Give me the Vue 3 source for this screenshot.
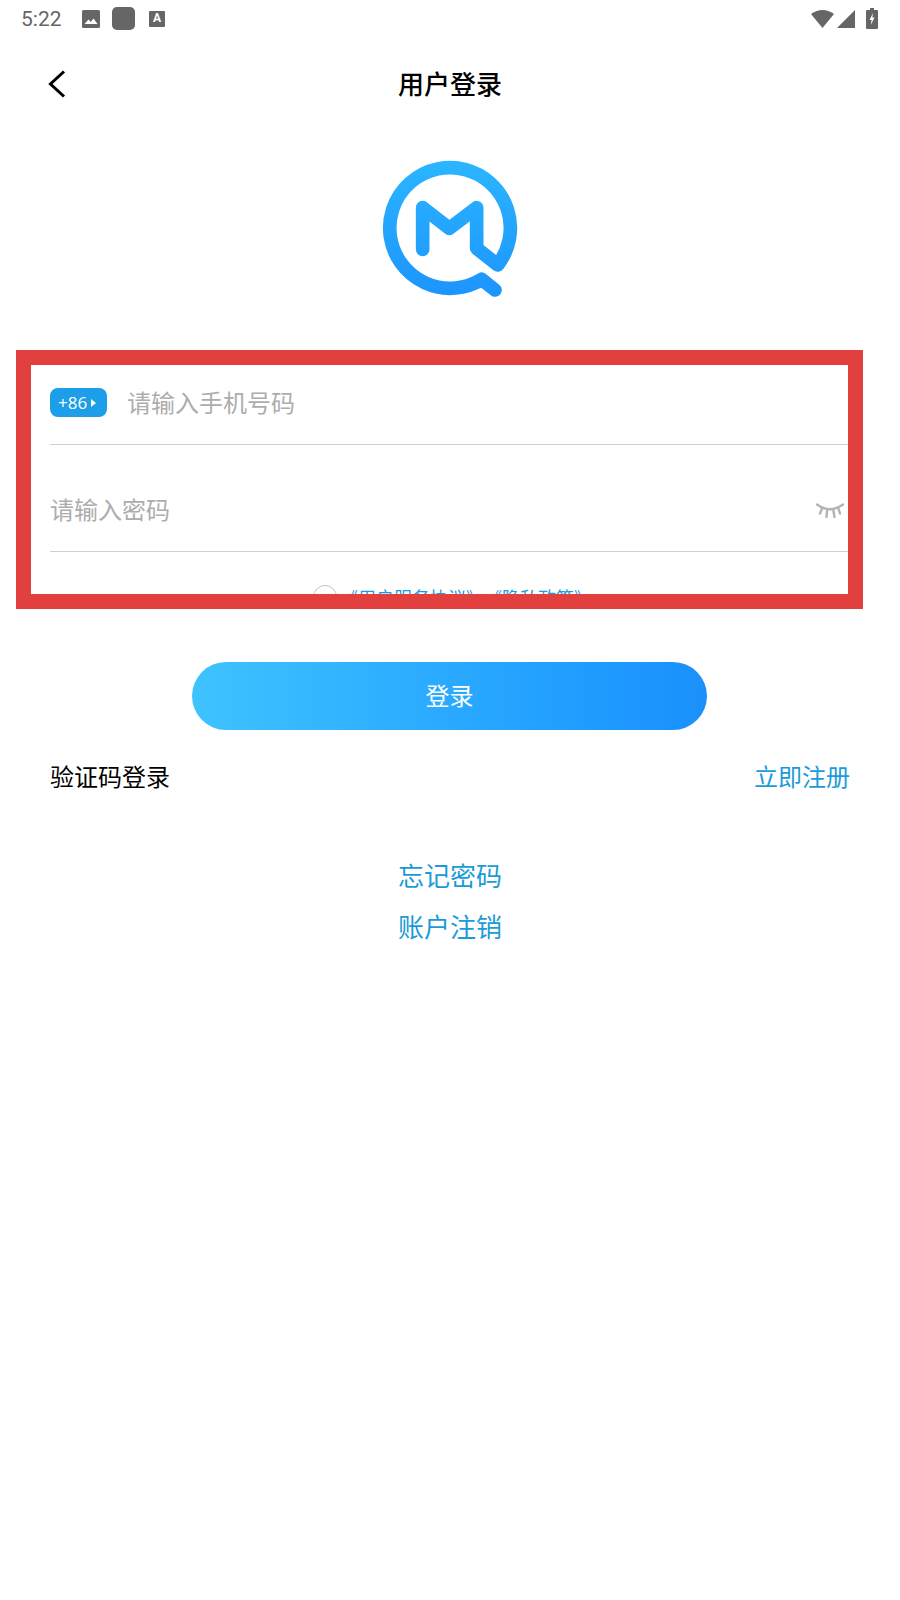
<template>
  <div class="page">
    <div class="status-bar">
      <div class="status-left">
        <span class="time">5:22</span>
        <svg class="ic-image" width="18" height="18" viewBox="0 0 18 18">
          <rect width="18" height="18" rx="1.5" fill="#666" />
          <path d="M2.5 14 L6.5 9.5 L8.8 12 L11.5 8.5 L15.5 14 Z" fill="#fff" />
        </svg>
        <span class="ic-square"></span>
        <span class="ic-font">A</span>
      </div>
      <div class="status-right">
        <svg width="23" height="19" viewBox="0 0 23 19"><path d="M0 5 Q11.5 -3 23 5 L11.5 19 Z" fill="#666" /></svg>
        <svg width="18" height="18" viewBox="0 0 18 18"><path d="M18 0 V18 H0 Z" fill="#666" /></svg>
        <svg class="ic-battery" width="12" height="21" viewBox="0 0 12 21">
          <path d="M4 0 H8 V2 H11 Q12 2 12 3 V20 Q12 21 11 21 H1 Q0 21 0 20 V3 Q0 2 1 2 H4 Z" fill="#666" />
          <path d="M7 5 L3.5 12 H5.6 L4.8 17 L8.5 9.6 H6.3 Z" fill="#fff" />
        </svg>
      </div>
    </div>

    <div class="nav">
      <svg class="back" width="18" height="28" viewBox="0 0 18 28">
        <path d="M16 1.5 L2.5 14 L16 26.5" fill="none" stroke="#000" stroke-width="3" />
      </svg>
      <span class="title">用户登录</span>
    </div>

    <svg class="logo" width="180" height="170" viewBox="0 0 540 510">
      <defs>
        <linearGradient id="logoGrad" gradientUnits="userSpaceOnUse" x1="0" y1="60" x2="0" y2="470">
          <stop offset="0" stop-color="#2bb6ff" />
          <stop offset="1" stop-color="#1c94fd" />
        </linearGradient>
      </defs>
      <path
        d="M188 328 V203 L268 265 L350 203 V325 L413 375 A181 181 0 1 0 365 418 L405 450"
        fill="none"
        stroke="url(#logoGrad)"
        stroke-width="41"
        stroke-linecap="round"
        stroke-linejoin="round"
      />
    </svg>

    <div class="form-box">
      <div class="row row-phone">
        <span class="code">+86<i class="caret"></i></span>
        <span class="placeholder">请输入手机号码</span>
      </div>
      <div class="row row-pwd">
        <span class="placeholder pwd">请输入密码</span>
        <svg class="eye" width="28" height="15" viewBox="0 0 28 15">
          <path
            d="M1 1.5 Q14 11 27 1.5 M6 5.5 L4 10.5 M11 8 L10.5 14 M17.5 8 L18.5 14 M22.5 5.5 L24 10.5"
            fill="none"
            stroke="#b3b3b3"
            stroke-width="2.4"
            stroke-linecap="round"
          />
        </svg>
      </div>
      <div class="agree">
        <span class="radio"></span>
        <span class="agree-text">《用户服务协议》、《隐私政策》</span>
      </div>
    </div>

    <button class="login-btn"><span class="login-label">登录</span></button>

    <div class="links">
      <span class="code-login">验证码登录</span>
      <span class="link">立即注册</span>
    </div>

    <div class="center-links">
      <span class="link big">忘记密码</span>
      <span class="link big">账户注销</span>
    </div>
  </div>
</template>

<script setup>
</script>

<style>
html,
body {
  background: #fff;
}
</style>

<style scoped>
.page {
  width: 900px;
  height: 1600px;
  background: #fff;
  overflow: hidden;
  display: flex;
  flex-direction: column;
  font-family: "Noto Sans CJK SC", "Noto Sans", sans-serif;
}

.status-bar {
  height: 37px;
  display: flex;
  justify-content: space-between;
  padding: 0 21px 0 21px;
  box-sizing: border-box;
}

.status-left,
.status-right {
  display: flex;
  align-items: center;
  height: 37px;
}

.time {
  font-family: Roboto, sans-serif;
  font-size: 21px;
  color: #666;
  width: 61px;
}

.ic-square {
  width: 23px;
  height: 23px;
  margin-left: 12px;
  background: #666;
  border-radius: 5px;
}

.ic-font {
  width: 16px;
  height: 16px;
  margin-left: 14px;
  background: #666;
  border-radius: 1px;
  color: #fff;
  font-family: Roboto, sans-serif;
  font-weight: 700;
  font-size: 12px;
  line-height: 15px;
  text-align: center;
}

.status-right {
  gap: 3px;
}

.ic-battery {
  margin-left: 8px;
  margin-right: 1px;
}

.nav {
  height: 94px;
  position: relative;
  display: flex;
  align-items: center;
  justify-content: center;
  padding-bottom: 4px;
  box-sizing: border-box;
}

.back {
  position: absolute;
  left: 48px;
  top: 33px;
}

.title {
  font-size: 26px;
  font-weight: 500;
  color: #000;
}

.logo {
  display: block;
  margin: 9px auto 0;
  flex: none;
}

.form-box {
  width: 847px;
  height: 259px;
  flex: none;
  margin: 40px 0 0 16px;
  border: 15px solid #e23f3f;
  box-sizing: border-box;
  overflow: hidden;
  padding-left: 19px;
}

.row {
  display: flex;
  align-items: center;
  border-bottom: 1px solid #cfcfcf;
  box-sizing: border-box;
}

.row-phone {
  height: 80px;
  gap: 21px;
  padding-bottom: 6px;
}

.row-pwd {
  height: 107px;
  justify-content: space-between;
  padding: 20px 4px 0 0;
}

.code {
  width: 57px;
  height: 29px;
  border-radius: 8px;
  background: #1c9fe8;
  color: #fff;
  font-family: "Open Sans", sans-serif;
  font-size: 17px;
  line-height: 29px;
  padding-left: 8px;
  box-sizing: border-box;
  display: flex;
  align-items: center;
  gap: 4px;
  margin-top: 2px;
}

.caret {
  width: 0;
  height: 0;
  border-left: 5px solid #fff;
  border-top: 4px solid transparent;
  border-bottom: 4px solid transparent;
}

.placeholder {
  font-size: 24px;
  color: #adadad;
  margin-left: -1px;
}

.pwd {
  margin-left: 0;
}

.eye {
  margin-top: 4px;
}

.agree {
  display: flex;
  align-items: center;
  margin-top: 33px;
  padding-left: 263px;
}

.radio {
  width: 24px;
  height: 24px;
  border: 1px solid #c4c4c4;
  border-radius: 50%;
  box-sizing: border-box;
  flex: none;
}

.agree-text {
  font-size: 18px;
  line-height: 24px;
  color: #1a9bdc;
  margin-left: 3px;
  white-space: nowrap;
}

.login-btn {
  width: 515px;
  height: 68px;
  flex: none;
  margin: 53px 0 0 192px;
  border: none;
  border-radius: 34px;
  background: linear-gradient(90deg, #3ec3ff, #209dff 75%, #1a90fb);
  color: #fff;
  font-family: inherit;
  font-size: 24px;
  padding: 0 0 4px;
}

.links {
  display: flex;
  justify-content: space-between;
  margin-top: 28px;
  padding: 0 50px 0 50px;
  font-size: 24px;
  line-height: 36px;
}

.code-login {
  color: #000;
}

.link {
  color: #1a9bd7;
}

.center-links {
  display: flex;
  flex-direction: column;
  align-items: center;
  margin-top: 55px;
}

.big {
  font-size: 26px;
  line-height: 51px;
}
</style>
